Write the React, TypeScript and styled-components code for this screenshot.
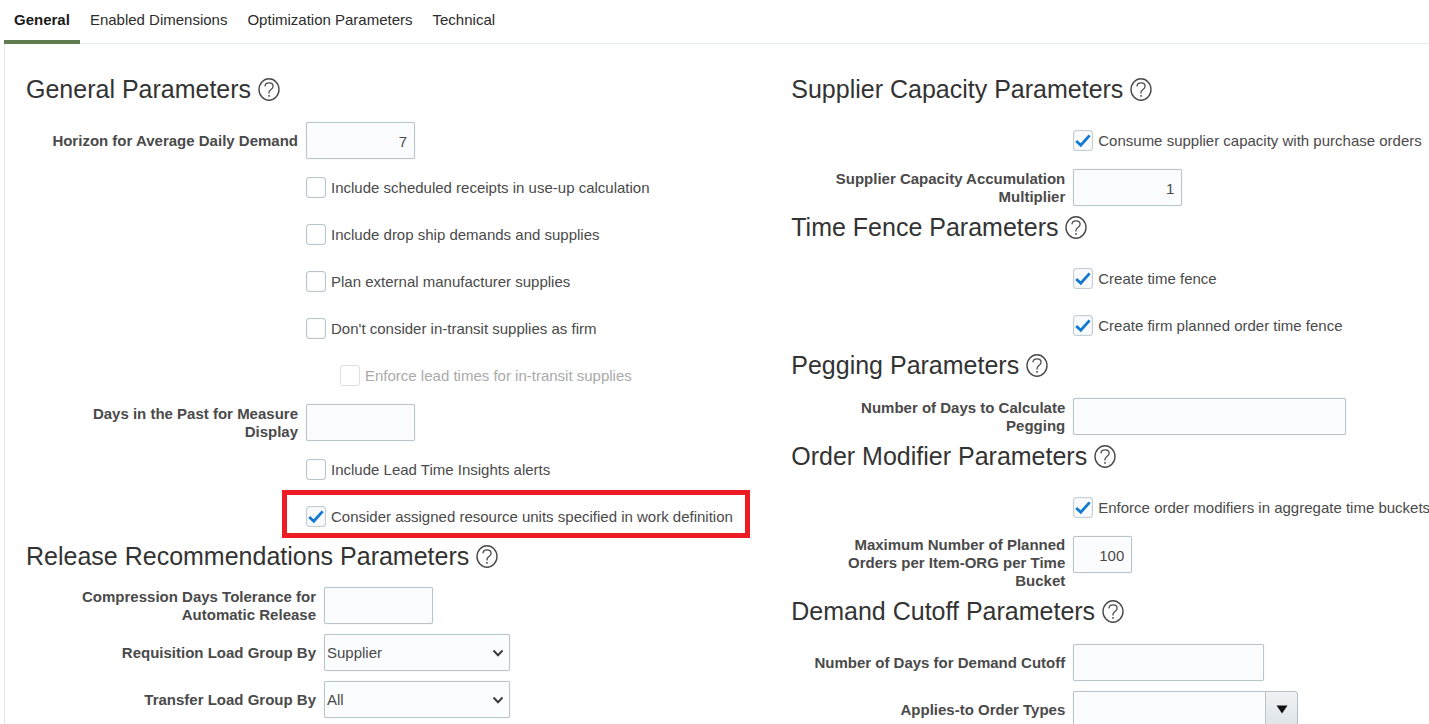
import React, { useId, useState } from "react";
import styled, { createGlobalStyle, css } from "styled-components";

const GlobalStyle = createGlobalStyle`
  *, *::before, *::after { box-sizing: border-box; }
  body {
    margin: 0;
    background: #fff;
    color: #4a4a4a;
    font-family: "Liberation Sans", Arial, sans-serif;
    font-size: 15px;
    line-height: 18px;
  }
  button, input, select { font: inherit; color: inherit; }
`;

const Page = styled.main`
  height: 100vh;
  overflow-x: hidden;
  overflow-y: auto;
  scrollbar-width: none;
  padding-left: 4px;
`;

const TabList = styled.div`
  display: flex;
  height: 44px;
  box-shadow: inset 0 -1px #e3e9ee;
`;

const Tab = styled.button<{ $active: boolean }>`
  padding: 0 10px;
  border: 0;
  border-bottom: 4px solid ${(p) => (p.$active ? "#5f7d4f" : "transparent")};
  background: none;
  color: ${(p) => (p.$active ? "#1a1a1a" : "#2c2c2c")};
  font-weight: ${(p) => (p.$active ? 700 : 400)};
  white-space: nowrap;
  cursor: pointer;
`;

const Panel = styled.div`
  display: grid;
  grid-template-columns: minmax(0, 6fr) minmax(0, 5fr);
  padding: 29px 0 0 21px;
  border-left: 1px solid #e3e9ee;
`;

const Column = styled.div`
  display: flex;
  flex-direction: column;
`;

const SectionBox = styled.section<{ $labelWidth: number }>`
  display: grid;
  grid-template-columns: ${(p) => p.$labelWidth}px minmax(0, 1fr);
  column-gap: 8px;
`;

const SectionHeader = styled.div<{ $tight?: boolean }>`
  grid-column: 1 / -1;
  display: flex;
  align-items: center;
  gap: 7px;
  height: ${(p) => (p.$tight ? 42 : 44)}px;
  padding-bottom: ${(p) => (p.$tight ? 10 : 12)}px;
`;

const Title = styled.h2`
  margin: 0;
  color: #333;
  font-size: 25px;
  font-weight: 400;
  line-height: 30px;
  white-space: nowrap;
`;

const HelpButton = styled.button`
  display: flex;
  padding: 0;
  border: 0;
  background: none;
  color: #4a4a4a;
  cursor: pointer;
`;

const LabelCell = styled.div<{ $tall?: boolean }>`
  display: flex;
  align-items: ${(p) => (p.$tall ? "flex-start" : "center")};
  justify-content: flex-end;
  padding: 5px 0;
`;

const FieldLabel = styled.label`
  max-width: 252px;
  font-weight: 700;
  text-align: right;
`;

const ControlCell = styled.div`
  display: flex;
  align-items: flex-start;
  min-height: 47px;
  padding: 5px 0;
`;

const fieldBox = css`
  height: 37px;
  border: 1px solid #b9c5cc;
  border-radius: 2px;
  background: #fbfcfe;
  outline: none;
  box-shadow: 0 0 1px #b9c5cc;
`;

const TextBox = styled.input<{ $width: number }>`
  ${fieldBox}
  width: ${(p) => p.$width}px;
  padding: 2px 7px 0;
  text-align: right;
`;

const SelectWrap = styled.div`
  display: grid;
  width: 186px;
  align-items: center;

  > * { grid-area: 1 / 1; }
  > svg {
    justify-self: end;
    margin-right: 6px;
    pointer-events: none;
  }
`;

const SelectBox = styled.select`
  ${fieldBox}
  width: 100%;
  padding: 0 24px 0 2px;
  appearance: none;
`;

const ComboWrap = styled.div`
  display: flex;
`;

const ComboInput = styled.input`
  ${fieldBox}
  width: 193px;
  padding: 0 7px;
  border-radius: 2px 0 0 2px;
`;

const ComboButton = styled.button`
  display: flex;
  align-items: center;
  justify-content: center;
  width: 32px;
  height: 37px;
  padding: 0;
  border: 1px solid #b3c0c8;
  border-left: 0;
  border-radius: 0 4px 4px 0;
  background: linear-gradient(#f0f3f5, #dde3e8);
  cursor: pointer;
`;

const CheckLabel = styled.label<{ $indent?: boolean; $disabled?: boolean; $highlight?: boolean }>`
  grid-column: 2;
  justify-self: start;
  position: relative;
  display: flex;
  align-items: center;
  gap: 5px;
  height: 47px;
  margin-left: ${(p) => (p.$indent ? 34 : 0)}px;
  color: ${(p) => (p.$disabled ? "#aaa" : "inherit")};
  white-space: nowrap;

  ${(p) =>
    p.$highlight &&
    css`
      &::after {
        content: "";
        position: absolute;
        inset: -3px -17px 2px -24px;
        border: 5px solid #ed1c24;
        pointer-events: none;
      }
    `}
`;

const CheckWrap = styled.span`
  display: grid;
  place-items: center;

  > * { grid-area: 1 / 1; }
  > svg { pointer-events: none; }
`;

const CheckInput = styled.input`
  appearance: none;
  width: 20px;
  height: 21px;
  margin: 0;
  border: 1px solid #b9c5cc;
  border-radius: 3px;
  background: #fff;
  box-shadow: inset 0 0 1px #b9c5cc;

  &:checked {
    border-color: #c5ced4;
    background: #f8fafb;
  }
  &:disabled {
    border-color: #dedede;
    box-shadow: none;
  }
`;

function Section({
  title,
  labelWidth,
  tight,
  children,
}: {
  title: string;
  labelWidth: number;
  tight?: boolean;
  children: React.ReactNode;
}) {
  return (
    <SectionBox $labelWidth={labelWidth}>
      <SectionHeader $tight={tight}>
        <Title>{title}</Title>
        <HelpButton type="button" aria-label={`Help for ${title}`}>
          <svg width="22" height="24" viewBox="0 0 22 24" fill="none" stroke="currentColor">
            <ellipse cx="11" cy="12.5" rx="10" ry="10.7" strokeWidth="1.4" />
            <path d="M6.9 9.4C7 7 8.5 5.8 11 5.8s4.1 1.2 4.1 3.4c0 1.7-1.1 2.5-2.2 3.3-1.2.9-1.9 1.5-1.9 3.1v.8" strokeWidth="1.3" />
            <path d="M11 18v1.7" strokeWidth="1.5" />
          </svg>
        </HelpButton>
      </SectionHeader>
      {children}
    </SectionBox>
  );
}

function Field({
  label,
  tall,
  children,
}: {
  label: string;
  tall?: boolean;
  children: (id: string) => React.ReactNode;
}) {
  const id = useId();
  return (
    <>
      <LabelCell $tall={tall}>
        <FieldLabel htmlFor={id}>{label}</FieldLabel>
      </LabelCell>
      <ControlCell>{children(id)}</ControlCell>
    </>
  );
}

function TextField({
  label,
  width,
  value = "",
  tall,
}: {
  label: string;
  width: number;
  value?: string;
  tall?: boolean;
}) {
  return (
    <Field label={label} tall={tall}>
      {(id) => <TextBox id={id} type="text" $width={width} defaultValue={value} />}
    </Field>
  );
}

function SelectField({ label, options }: { label: string; options: string[] }) {
  return (
    <Field label={label}>
      {(id) => (
        <SelectWrap>
          <SelectBox id={id}>
            {options.map((o) => (
              <option key={o}>{o}</option>
            ))}
          </SelectBox>
          <svg width="12" height="10" viewBox="0 0 12 10" fill="none" stroke="#3c3c3c" strokeWidth="2">
            <path d="M1.5 2.5 6 7.2l4.5-4.7" />
          </svg>
        </SelectWrap>
      )}
    </Field>
  );
}

function CheckField({
  label,
  checked = false,
  indent,
  disabled,
  highlight,
}: {
  label: string;
  checked?: boolean;
  indent?: boolean;
  disabled?: boolean;
  highlight?: boolean;
}) {
  const [on, setOn] = useState(checked);
  return (
    <CheckLabel $indent={indent} $disabled={disabled} $highlight={highlight}>
      <CheckWrap>
        <CheckInput
          type="checkbox"
          checked={on}
          disabled={disabled}
          onChange={(e) => setOn(e.target.checked)}
        />
        {on && (
          <svg width="18" height="18" viewBox="0 0 18 18" fill="none" stroke="#1279d2" strokeWidth="2.8">
            <path d="M2.2 9 6.8 13.2 15.6 3.4" />
          </svg>
        )}
      </CheckWrap>
      {label}
    </CheckLabel>
  );
}

const TABS = ["General", "Enabled Dimensions", "Optimization Parameters", "Technical"];

export default function App() {
  const [tab, setTab] = useState(TABS[0]);
  return (
    <>
      <GlobalStyle />
      <Page>
        <TabList role="tablist">
          {TABS.map((t) => (
            <Tab key={t} type="button" role="tab" aria-selected={t === tab} $active={t === tab} onClick={() => setTab(t)}>
              {t}
            </Tab>
          ))}
        </TabList>
        <Panel role="tabpanel" aria-label={tab}>
          <Column>
            <Section title="General Parameters" labelWidth={272}>
              <TextField label="Horizon for Average Daily Demand" width={109} value="7" />
              <CheckField label="Include scheduled receipts in use-up calculation" />
              <CheckField label="Include drop ship demands and supplies" />
              <CheckField label="Plan external manufacturer supplies" />
              <CheckField label="Don't consider in-transit supplies as firm" />
              <CheckField label="Enforce lead times for in-transit supplies" indent disabled />
              <TextField label="Days in the Past for Measure Display" width={109} />
              <CheckField label="Include Lead Time Insights alerts" />
              <CheckField label="Consider assigned resource units specified in work definition" checked highlight />
            </Section>
            <Section title="Release Recommendations Parameters" labelWidth={290} tight>
              <TextField label="Compression Days Tolerance for Automatic Release" width={109} />
              <SelectField label="Requisition Load Group By" options={["Supplier", "All"]} />
              <SelectField label="Transfer Load Group By" options={["All"]} />
            </Section>
          </Column>
          <Column>
            <Section title="Supplier Capacity Parameters" labelWidth={274}>
              <CheckField label="Consume supplier capacity with purchase orders" checked />
              <TextField label="Supplier Capacity Accumulation Multiplier" width={109} value="1" />
            </Section>
            <Section title="Time Fence Parameters" labelWidth={274}>
              <CheckField label="Create time fence" checked />
              <CheckField label="Create firm planned order time fence" checked />
            </Section>
            <Section title="Pegging Parameters" labelWidth={274}>
              <TextField label="Number of Days to Calculate Pegging" width={273} />
            </Section>
            <Section title="Order Modifier Parameters" labelWidth={274}>
              <CheckField label="Enforce order modifiers in aggregate time buckets" checked />
              <TextField
                label="Maximum Number of Planned Orders per Item-ORG per Time Bucket"
                width={59}
                value="100"
                tall
              />
            </Section>
            <Section title="Demand Cutoff Parameters" labelWidth={274}>
              <TextField label="Number of Days for Demand Cutoff" width={191} />
              <Field label="Applies-to Order Types">
                {(id) => (
                  <ComboWrap>
                    <ComboInput id={id} type="text" />
                    <ComboButton type="button" aria-label="Show order types">
                      <svg width="12" height="9" viewBox="0 0 12 9">
                        <path d="M.5.5h11L6 8.5z" fill="#111" />
                      </svg>
                    </ComboButton>
                  </ComboWrap>
                )}
              </Field>
            </Section>
          </Column>
        </Panel>
      </Page>
    </>
  );
}
